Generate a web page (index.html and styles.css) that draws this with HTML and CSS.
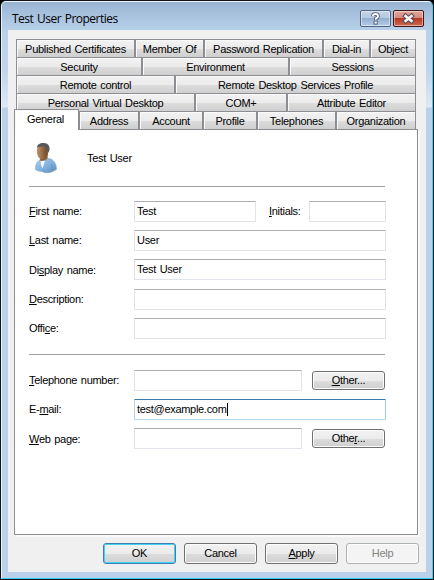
FILE: index.html
```
<!DOCTYPE html>
<html lang="en">
<head>
    <meta charset="UTF-8">
    <meta name="viewport" content="width=device-width, initial-scale=1.0">
    <title>Test User Properties</title>
    <link rel="stylesheet" href="styles.css">
</head>
<body>
    <div class="window">
        <div class="frame">
            <div class="titlebar">
                <h1>Test User Properties</h1>
                <div class="controls">
                    <button class="control help" aria-label="Help">
                        <svg width="29" height="15" viewBox="0 0 29 15">
                            <path d="M12 5.2V4.6Q12 3 14.5 3T17 5.2Q17 6.6 14.8 7.7V9" fill="none" stroke="#4b5a70" stroke-width="3.6"/>
                            <rect x="12.6" y="9.6" width="4" height="4" fill="#4b5a70"/>
                            <path d="M12 5.2V4.6Q12 3 14.5 3T17 5.2Q17 6.6 14.8 7.7V8.8" fill="none" stroke="#fff" stroke-width="1.9"/>
                            <rect x="13.6" y="10.5" width="2.2" height="2.1" fill="#fff"/>
                        </svg>
                    </button>
                    <button class="control close" aria-label="Close">
                        <svg width="29" height="15" viewBox="0 0 29 15">
                            <path d="M11.500 5L17.500 10M17.500 5L11.500 10" stroke="#5b4a58" stroke-width="4.6" stroke-linecap="square"/>
                            <path d="M11.500 5L17.500 10M17.500 5L11.500 10" stroke="#f7f7f7" stroke-width="2.5" stroke-linecap="square"/>
                        </svg>
                    </button>
                </div>
            </div>

            <div class="client">
                <div class="tabs">
                    <div class="tab-row row1">
                        <div class="tab">Published Certificates</div>
                        <div class="tab">Member Of</div>
                        <div class="tab">Password Replication</div>
                        <div class="tab">Dial-in</div>
                        <div class="tab">Object</div>
                    </div>
                    <div class="tab-row row2">
                        <div class="tab">Security</div>
                        <div class="tab">Environment</div>
                        <div class="tab">Sessions</div>
                    </div>
                    <div class="tab-row row3">
                        <div class="tab">Remote control</div>
                        <div class="tab">Remote Desktop Services Profile</div>
                    </div>
                    <div class="tab-row row4">
                        <div class="tab">Personal Virtual Desktop</div>
                        <div class="tab">COM+</div>
                        <div class="tab">Attribute Editor</div>
                    </div>
                    <div class="tab-row row5">
                        <div class="tab active">General</div>
                        <div class="tab">Address</div>
                        <div class="tab">Account</div>
                        <div class="tab">Profile</div>
                        <div class="tab">Telephones</div>
                        <div class="tab">Organization</div>
                    </div>
                </div>

                <div class="panel">
                    <div class="user">
                        <svg width="24" height="32" viewBox="0 0 24 32">
                            <defs>
                                <linearGradient id="skin" x1="0" y1="0" x2="1" y2="0">
                                    <stop offset="0" stop-color="#c09468"/>
                                    <stop offset="1" stop-color="#694422"/>
                                </linearGradient>
                                <linearGradient id="shirt" x1="0" y1="0" x2="1" y2="1">
                                    <stop offset="0" stop-color="#a9cdec"/>
                                    <stop offset="0.6" stop-color="#7badde"/>
                                    <stop offset="1" stop-color="#5b86b4"/>
                                </linearGradient>
                            </defs>
                            <path d="M1.5 25C2 21 4 19 7 17L15 16.5C20 17.500 22.500 22 22.500 27.500Q17 31.500 11 30.800Q9 29.500 7.500 29.500Q4 29.500 1.300 27.500Z" fill="url(#shirt)" stroke="#86a6c3" stroke-width="0.6"/>
                            <path d="M6.500 17.500L7 23L8.500 26.500L11.500 17.500Z" fill="#f4f8fc"/>
                            <path d="M5 12L6.500 19Q11 19.500 13.500 16.500L14 11Z" fill="#8b6038"/>
                            <path d="M2.800 7C2.500 12 4 16.500 7.500 17Q11.500 17 13.800 11L14 4L8 2Z" fill="url(#skin)"/>
                            <path d="M3 6C3 2.500 6 .8 10 1C14 1.200 16 4 15.500 7.500Q15 10 14 11Q13.800 8.500 12.800 8.300Q12.800 4.800 9.500 4.500Q5.500 4 3 6Z" fill="#55585a"/>
                            <path d="M8.500 27L10 30.500M17.500 22L18.500 28" stroke="#668fb8" stroke-width="0.8" fill="none"/>
                        </svg>
                        <span>Test User</span>
                    </div>

                    <div class="divider"></div>

                    <div class="form">
                        <div class="field">
                            <label for="firstName"><u>F</u>irst name:</label>
                            <input class="text first" type="text" id="firstName" value="Test">
                            <label class="initials-label" for="initials"><u>I</u>nitials:</label>
                            <input class="text initials" type="text" id="initials">
                        </div>
                        <div class="field">
                            <label for="lastName"><u>L</u>ast name:</label>
                            <input class="text" type="text" id="lastName" value="User">
                        </div>
                        <div class="field shifted">
                            <label for="displayName">Di<u>s</u>play name:</label>
                            <input class="text" type="text" id="displayName" value="Test User">
                        </div>
                        <div class="field">
                            <label for="description"><u>D</u>escription:</label>
                            <input class="text" type="text" id="description">
                        </div>
                        <div class="field">
                            <label for="office">Offi<u>c</u>e:</label>
                            <input class="text" type="text" id="office">
                        </div>
                    </div>

                    <div class="divider second"></div>

                    <div class="form contact">
                        <div class="field">
                            <label for="telephone"><u>T</u>elephone number:</label>
                            <input class="text short" type="text" id="telephone">
                            <button class="btn other"><u>O</u>ther...</button>
                        </div>
                        <div class="field">
                            <label>E-<u>m</u>ail:</label>
                            <div class="text focused">test@example.com<span class="caret"></span></div>
                        </div>
                        <div class="field shifted">
                            <label for="webPage"><u>W</u>eb page:</label>
                            <input class="text short" type="text" id="webPage">
                            <button class="btn other">Othe<u>r</u>...</button>
                        </div>
                    </div>
                </div>

                <div class="actions">
                    <button class="btn default">OK</button>
                    <button class="btn">Cancel</button>
                    <button class="btn"><u>A</u>pply</button>
                    <button class="btn" disabled>Help</button>
                </div>
            </div>
        </div>
    </div>
</body>
</html>
```
FILE: styles.css
```
* {
    box-sizing: border-box;
}

body {
    margin: 0;
    background: #000;
    font-family: "Liberation Sans", Arial, sans-serif;
    font-size: 11px;
    letter-spacing: -0.3px;
    word-spacing: 1px;
    color: #000;
    overflow: hidden;
}

/* Window frame */
.window {
    width: 434px;
    height: 580px;
    padding: 1px;
    border-radius: 6px 6px 0 0;
    background: #10141a;
}

.frame {
    height: 578px;
    padding: 0 6px;
    border: 1px solid #35d0ee;
    border-top-color: #eef6fc;
    border-left-color: #e8f4fa;
    border-radius: 5px 5px 0 0;
    background: linear-gradient(#99b4d2 0, #a9c3df 14px, #b9d1ea 30px, #bfd6ee 70px, #dce9f6 105px, #b9d1ea 106px);
}

.titlebar {
    display: flex;
    justify-content: space-between;
    height: 28px;
    padding: 8px 2px 0 4px;
}

h1 {
    margin: 0;
    font-family: "Open Sans", sans-serif;
    font-size: 12px;
    font-weight: normal;
    line-height: 18px;
    letter-spacing: -0.5px;
}

.controls {
    display: flex;
    gap: 2px;
}

.control {
    width: 31px;
    height: 17px;
    padding: 0;
    border: 1px solid #52647e;
    border-radius: 2px;
    box-shadow: inset 0 0 0 1px rgba(255, 255, 255, 0.45);
    background: linear-gradient(#c3d5e8 0, #b2c8df 50%, #94b0cf 50%, #b4cde8 100%);
}

.control svg {
    display: block;
}

.close {
    border-color: #43141a;
    background: linear-gradient(#e3a69b 0, #d1897b 48%, #b73823 50%, #cf6a50 100%);
}

.client {
    height: 542px;
    padding: 9px 0 0;
    background: #f0f0f0;
}

/* Tabs */
.tabs {
    padding-left: 8px;
    width: 408px;
}

.tab-row {
    display: grid;
    height: 18px;
}

.row1 { grid-template-columns: 119px 69px 119px 47px 46px; }
.row2 { grid-template-columns: 126px 147px 127px; }
.row3 { grid-template-columns: 159px 241px; }
.row4 { grid-template-columns: 179px 92px 129px; }
.row5 { grid-template-columns: 63px 60px 64px 54px 79px 80px; }

.tab {
    height: 18px;
    border: 1px solid #8c8e94;
    border-bottom: 0;
    box-shadow: inset 1px 1px 0 #fafafa;
    background: linear-gradient(#f2f2f2 0, #ebebeb 50%, #dddddd 52%, #cfcfcf 100%);
    line-height: 18px;
    text-align: center;
    white-space: nowrap;
}

.tab.active {
    height: 21px;
    margin: -2px 0 0 -2px;
    padding-right: 2px;
    background: #fff;
    z-index: 1;
}

/* General page */
.panel {
    width: 404px;
    height: 406px;
    margin-left: 6px;
    padding: 0 32px 0 14px;
    border: 1px solid #8c8e94;
    box-shadow: 2px 2px 0 #fafafa;
    background: #fff;
}

.user {
    display: flex;
    align-items: center;
    gap: 29px;
    height: 56px;
    padding: 0 0 0 5px;
}

.divider {
    height: 1px;
    width: 356px;
    background: #a0a0a0;
}

.second {
    margin-top: 15px;
}

.form {
    display: grid;
    grid-template-rows: 29px 29px 30px 29px 21px;
    padding-top: 14px;
}

.contact {
    grid-template-rows: 29px 29px 21px;
    padding-top: 15px;
}

.field {
    display: flex;
    height: 21px;
    line-height: 21px;
}

.field label {
    width: 105px;
    flex: none;
}

.shifted label {
    padding-top: 1px;
}

.field .initials-label {
    width: 40px;
    margin-left: 13px;
}

u {
    text-decoration: underline;
    text-underline-offset: 1px;
    text-decoration-thickness: 1px;
    text-decoration-skip-ink: none;
}

.text {
    width: 252px;
    height: 21px;
    flex: none;
    padding: 0 0 1px 2px;
    border: 1px solid #e2e3ea;
    border-top-color: #abadb3;
    border-radius: 1px;
    background: #fff;
    font: inherit;
    line-height: 18px;
    letter-spacing: inherit;
    word-spacing: inherit;
    color: #000;
}

.first { width: 122px; }
.initials { width: 77px; }
.short { width: 168px; }

.focused {
    display: flex;
    align-items: center;
    padding: 0 0 1px 2px;
    border-color: #3d7bad #a4c9e3 #b7d9ed #b5cfe7;
}

.caret {
    width: 1px;
    height: 13px;
    background: #000;
}

/* Buttons */
.btn {
    width: 73px;
    height: 21px;
    padding: 0;
    border: 1px solid #707070;
    border-radius: 3px;
    box-shadow: inset 0 0 0 1px #fcfcfc;
    background: linear-gradient(#f2f2f2 0, #ebebeb 50%, #dddddd 52%, #cfcfcf 100%);
    font: inherit;
    line-height: 13px;
    letter-spacing: inherit;
    color: #000;
}

.other {
    height: 19px;
    margin: 1px 0 0 10px;
}

.default {
    border-color: #3c7fb1;
    box-shadow: inset 0 0 0 1px #43d2f5;
}

.btn:disabled {
    border-color: #adb2b5;
    background: #f4f4f4;
    color: #838383;
}

.actions {
    display: flex;
    gap: 8px;
    padding: 8px 0 0 95px;
}
```
